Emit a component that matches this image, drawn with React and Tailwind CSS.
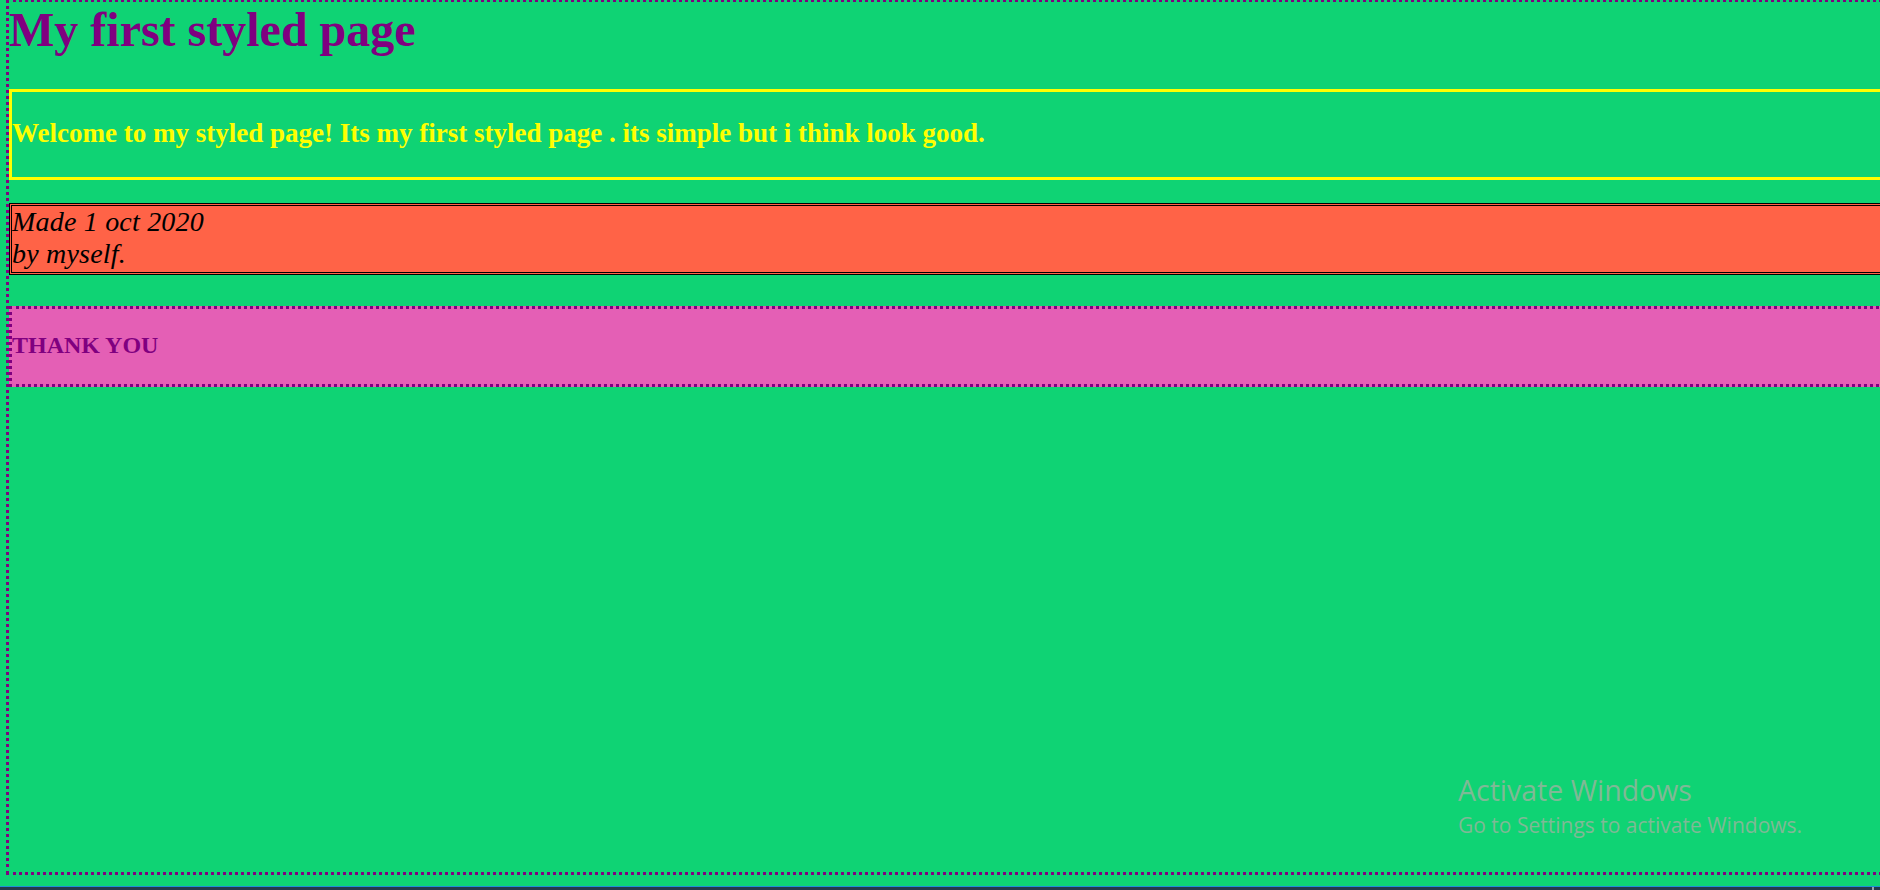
export default function App() {
  return (
    <div className="relative h-[890px] w-[1880px] overflow-hidden bg-[#0fd374] font-['Liberation_Serif','Times_New_Roman',serif]">
      <div className="ml-[6px] -mt-px h-[876px] w-[1900px] border-[3px] border-dotted border-[#800080]">
        <h1 className="m-0 text-[48px] font-bold leading-[55px] text-[#800080]">My first styled page</h1>
        <div className="mt-[32px] h-[91px] border-[3px] border-solid border-[#ffff00] pt-[25px]">
          <h3 className="m-0 text-[27px] font-bold leading-[32px] text-[#ffff00]">
            Welcome to my styled page! Its my first styled page . its simple but i think look good.
          </h3>
        </div>
        <div className="mt-[23px] h-[72px] border-[3px] border-double border-black bg-[#ff6347]">
          <p className="m-0 text-[28px] italic leading-[32px] tracking-[0.2px] text-black">
            Made 1 oct 2020
            <br />
            by myself.
          </p>
        </div>
        <div className="mt-[31px] h-[81px] border-[3px] border-dotted border-[#800080] bg-[#e45fb5] pt-[22px]">
          <h4 className="m-0 text-[24px] font-bold leading-[28px] text-[#800080]">THANK YOU</h4>
        </div>
      </div>
      <div className="absolute left-[1458px] top-[774px] font-['Open_Sans',sans-serif] text-[#7fb996]">
        <div className="text-[28.5px] leading-[32px]">Activate Windows</div>
        <div className="mt-[7px] text-[21px] leading-[24px]">Go to Settings to activate Windows.</div>
      </div>
      <div className="absolute bottom-0 left-0 h-[4px] w-full border-t border-[#1e8fd6] bg-[#24394b]">
        <div className="absolute right-[6px] top-0 h-full w-[2px] bg-[#9aa5ae]"></div>
      </div>
    </div>
  );
}
